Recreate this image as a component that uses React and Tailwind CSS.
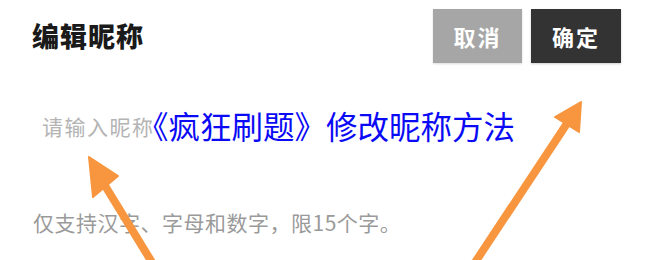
const cjk = "font-['Noto_Sans_CJK_SC',sans-serif]";

function Arrows() {
  return (
    <svg
      className="absolute inset-0 pointer-events-none"
      width="650"
      height="260"
      viewBox="0 0 650 260"
    >
      <g fill="#f7963f" stroke="#f7963f" strokeLinejoin="round">
        <line x1="104" y1="184" x2="153" y2="264" strokeWidth="8" />
        <polygon points="89,157 118,176 93,197" strokeWidth="2" />
        <line x1="568" y1="122" x2="474" y2="264" strokeWidth="8" />
        <polygon points="581,102 555,117 579,132" strokeWidth="2" />
      </g>
    </svg>
  );
}

export default function App() {
  return (
    <div className={`relative w-[650px] h-[260px] overflow-hidden bg-white ${cjk}`}>
      <div className="flex items-center justify-between pt-[9px] pl-[32px] pr-[29px]">
        <h1 className="text-[27px] leading-[36px] font-black text-[#1a1a1a] tracking-[1px]">
          编辑昵称
        </h1>
        <div className="flex gap-[9px]">
          <button className="w-[89px] h-[54px] bg-[#a6a6a6] text-white text-[22px] font-semibold tracking-[2px] shadow-[0_1px_2px_rgba(0,0,0,0.15)]">
            取消
          </button>
          <button className="w-[90px] h-[54px] bg-[#333333] text-white text-[22px] font-semibold tracking-[2px] shadow-[0_1px_2px_rgba(0,0,0,0.2)]">
            确定
          </button>
        </div>
      </div>

      <div className="mt-[48px] pl-[42px] text-[21px] leading-[30px] text-[#b4b4b4] tracking-[1.5px]">
        请输入昵称
      </div>

      <div className="mt-[66px] pl-[33px] text-[21px] leading-[30px] text-[#9a9a9a] tracking-[0.5px]">
        仅支持汉字、字母和数字，限15个字。
      </div>

      <div className="absolute left-[137px] top-[105px] text-[31.5px] leading-[40px] text-[#0a0af5]">
        《疯狂刷题》修改昵称方法
      </div>

      <Arrows />
    </div>
  );
}
